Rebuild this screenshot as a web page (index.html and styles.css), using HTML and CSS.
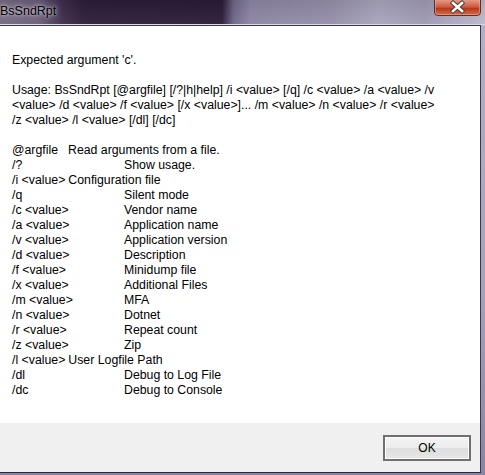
FILE: index.html
```html
<!DOCTYPE html>
<html lang="en">
<head>
  <meta charset="UTF-8" />
  <title>BsSndRpt</title>
  <link rel="stylesheet" href="styles.css">
</head>
<body>
  <div class="window">
    <!-- Title bar -->
    <div class="titlebar">
      <span class="title">BsSndRpt</span>
      <div class="close">
        <svg width="47" height="16" viewBox="0 0 47 16">
          <defs>
            <linearGradient id="red" x1="0" y1="0" x2="0" y2="1">
              <stop offset="0" stop-color="#e59a86"/>
              <stop offset="0.45" stop-color="#cc5a40"/>
              <stop offset="0.55" stop-color="#b8381c"/>
              <stop offset="1" stop-color="#d8704a"/>
            </linearGradient>
          </defs>
          <path d="M0.5 0 V12 Q0.5 15.5 4 15.5 H43 Q46.5 15.5 46.5 12 V0" fill="url(#red)" stroke="#5c2d2d"/>
          <path d="M1.5 0 V12 Q1.5 14.5 4 14.5 H43 Q45.5 14.5 45.5 12 V0" fill="none" stroke="#f0b8a8" stroke-opacity="0.5"/>
          <path d="M19 3 L28 11 M28 3 L19 11" stroke="#4a3a3a" stroke-width="4.4" stroke-linecap="square"/>
          <path d="M19 3 L28 11 M28 3 L19 11" stroke="#ffffff" stroke-width="2.6" stroke-linecap="square"/>
        </svg>
      </div>
    </div>

    <div class="client">
      <div class="content">
        <p class="line">Expected argument 'c'.</p>
        <p class="line blank"></p>
        <p class="line">Usage: BsSndRpt [@argfile] [/?|h|help] /i &lt;value&gt; [/q] /c &lt;value&gt; /a &lt;value&gt; /v</p>
        <p class="line">&lt;value&gt; /d &lt;value&gt; /f &lt;value&gt; [/x &lt;value&gt;]... /m &lt;value&gt; /n &lt;value&gt; /r &lt;value&gt;</p>
        <p class="line">/z &lt;value&gt; /l &lt;value&gt; [/dl] [/dc]</p>
        <p class="line blank"></p>

        <div class="opt"><span class="key short">@argfile</span><span>Read arguments from a file.</span></div>
        <div class="opt"><span class="key">/?</span><span>Show usage.</span></div>
        <div class="opt"><span class="key short">/i &lt;value&gt;</span><span>Configuration file</span></div>
        <div class="opt"><span class="key">/q</span><span>Silent mode</span></div>
        <div class="opt"><span class="key">/c &lt;value&gt;</span><span>Vendor name</span></div>
        <div class="opt"><span class="key">/a &lt;value&gt;</span><span>Application name</span></div>
        <div class="opt"><span class="key">/v &lt;value&gt;</span><span>Application version</span></div>
        <div class="opt"><span class="key">/d &lt;value&gt;</span><span>Description</span></div>
        <div class="opt"><span class="key">/f &lt;value&gt;</span><span>Minidump file</span></div>
        <div class="opt"><span class="key">/x &lt;value&gt;</span><span>Additional Files</span></div>
        <div class="opt"><span class="key">/m &lt;value&gt;</span><span>MFA</span></div>
        <div class="opt"><span class="key">/n &lt;value&gt;</span><span>Dotnet</span></div>
        <div class="opt"><span class="key">/r &lt;value&gt;</span><span>Repeat count</span></div>
        <div class="opt"><span class="key">/z &lt;value&gt;</span><span>Zip</span></div>
        <div class="opt"><span class="key short">/l &lt;value&gt;</span><span>User Logfile Path</span></div>
        <div class="opt"><span class="key">/dl</span><span>Debug to Log File</span></div>
        <div class="opt"><span class="key">/dc</span><span>Debug to Console</span></div>
      </div>

      <div class="footer">
        <button class="ok">OK</button>
      </div>
    </div>
  </div>
</body>
</html>
```

FILE: styles.css
```css
* {
  box-sizing: border-box;
}

body {
  margin: 0;
  width: 485px;
  height: 475px;
  overflow: hidden;
  font-family: "Liberation Sans", Arial, sans-serif;
  font-size: 12.3px;
  color: #000;
}

.window {
  width: 485px;
  height: 475px;
  display: flex;
  flex-direction: column;
  background: linear-gradient(to bottom, #b4b0c8, #a6a1bd 60%, #8a84a4);
  padding: 0 4px 2px 0;
}

/* Aero title bar */
.titlebar {
  height: 25px;
  margin-right: -4px;
  display: flex;
  align-items: flex-start;
  justify-content: space-between;
  border-bottom: 1px solid #dcd9e6;
  background:
    linear-gradient(to bottom, rgba(0,0,0,0.08), rgba(255,255,255,0.05)),
    linear-gradient(to right, #756a80 0, #6c5e79 38px, #3e2d4c 62px, #2c1c39 85px, #2a1a37 222px,
      #6f6888 234px, #8b85a3 250px, #948ea9 330px, #a8a4bc 378px, #9e99b3 425px, #bdb9cb 485px);
}

.title {
  line-height: 22px;
  font-size: 12.5px;
  text-shadow: 0 0 6px rgba(230, 225, 240, 0.8), 0 0 3px rgba(230, 225, 240, 0.8);
}

.close {
  width: 47px;
  height: 16px;
  margin-right: 4px;
}

.close svg {
  display: block;
}

.client {
  flex: 1;
  display: flex;
  flex-direction: column;
  border-top: 1px solid #3b3650;
  border-right: 1px solid #3b3650;
  border-bottom: 1px solid #2e2838;
}

.content {
  flex: 1;
  background: #fff;
  padding: 27px 12px 0;
}

.line {
  margin: 0;
  height: 15px;
  line-height: 15px;
  white-space: pre;
}

.opt {
  display: flex;
  height: 15px;
  line-height: 15px;
  white-space: pre;
}

.key {
  min-width: 112px;
}

.key.short {
  min-width: 56px;
  padding-right: 3px;
}

.footer {
  height: 49px;
  background: #f0f0f0;
  display: flex;
  justify-content: flex-end;
  padding: 12px 9px 0 0;
}

.ok {
  width: 88px;
  height: 26px;
  font-family: inherit;
  font-size: 12px;
  color: #000;
  border: 2px solid #6f6f6f;
  box-shadow: inset 0 0 0 1px #fdfdfd;
  background: linear-gradient(to bottom, #f4f4f4 0, #ececec 50%, #dedede 51%, #e6e6e6 100%);
  padding: 0;
}
```
